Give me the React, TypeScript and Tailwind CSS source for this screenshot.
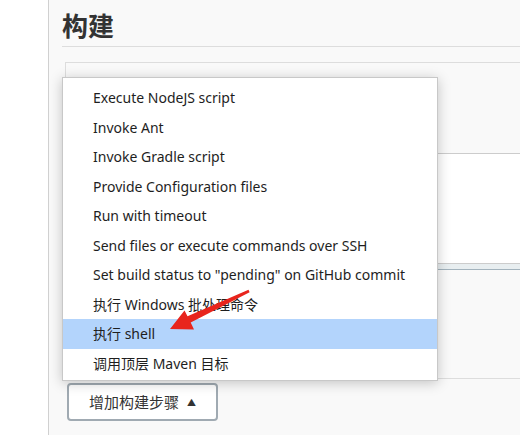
const items = [
  "Execute NodeJS script",
  "Invoke Ant",
  "Invoke Gradle script",
  "Provide Configuration files",
  "Run with timeout",
  "Send files or execute commands over SSH",
  'Set build status to "pending" on GitHub commit',
  "执行 Windows 批处理命令",
  "执行 shell",
  "调用顶层 Maven 目标",
];

function Arrow() {
  return (
    <svg className="absolute left-0 top-0 pointer-events-none" width="520" height="435">
      <polygon
        fill="#e8251d"
        points="170,329 184.5,310.5 187.5,316.2 248.5,289.8 249.6,292.2 190.7,322.6 194,329.5"
      />
    </svg>
  );
}

export default function App() {
  return (
    <div className="relative flex h-[435px] w-[520px] overflow-hidden bg-white font-['Noto_Sans','Noto_Sans_CJK_SC',sans-serif] text-[#333]">
      <div className="w-[49px] shrink-0 border-r border-[#d0d0d0] bg-white" />
      <div className="flex flex-1 flex-col bg-[#f9f9f9] pl-[13px]">
        <div className="flex h-[47px] items-end border-b border-[#dddddd] pb-[3px]">
          <h1 className="text-[26px] font-bold leading-[34px] text-[#333]">构建</h1>
        </div>
        <div className="ml-[3px] mt-[15px] h-[317px] border-l border-t border-b border-[#dddddd]">
          <div className="ml-[40px] mt-[90px] h-[110px] border-t border-[#cccccc] bg-white" />
          <div className="ml-[40px] h-[7px] border-t border-b border-t-[#cccccc] border-b-[#a3b3bd] bg-[#e8eef0]" />
        </div>
        <div className="ml-[5px] mt-[4px]">
          <button className="flex h-[38px] w-[151px] items-center justify-center gap-[8px] rounded-[4px] border-2 border-[#a0aab2] bg-white text-[15px] text-[#333]">
            <span>增加构建步骤</span>
            <span className="text-[9px] leading-none">▲</span>
          </button>
        </div>
      </div>

      <div className="absolute left-[62px] top-[77px] h-[304px] w-[376px] border border-[#c8c8c8] bg-white pt-[5px] shadow-[0_2px_12px_rgba(0,0,0,0.22)]">
        {items.map((label) => (
          <div
            key={label}
            className={`flex h-[29.5px] items-center pl-[30px] text-[14px] text-[#1e1e1e] ${label === "执行 shell" ? "bg-[#b3d4fc]" : ""}`}
          >
            {label}
          </div>
        ))}
      </div>
      <Arrow />
    </div>
  );
}
